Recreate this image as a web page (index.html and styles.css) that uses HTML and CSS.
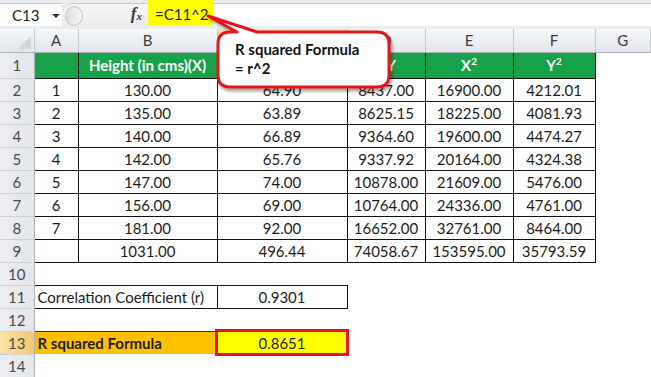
FILE: index.html
```html
<!DOCTYPE html>
<html lang="en">

<head>
    <meta charset="UTF-8">
    <meta name="viewport" content="width=device-width, initial-scale=1.0">
    <title>R Squared Formula</title>
    <link rel="stylesheet" href="styles.css">
</head>

<body>

    <div class="top">
        <div class="name-box">C13<span class="caret"></span></div>
        <div class="fx-area"><span class="knob"></span><span class="fx"><i>f</i><sub>x</sub></span></div>
        <div class="formula">=C11^2</div>
        <div class="formula-rest"></div>
    </div>

    <table class="grid">
        <colgroup>
            <col style="width:34px">
            <col style="width:44px">
            <col style="width:139px">
            <col style="width:130px">
            <col style="width:78px">
            <col style="width:88px">
            <col style="width:82px">
            <col>
        </colgroup>
        <tr class="col-heads">
            <th class="corner"><span class="corner-tri"></span></th>
            <th>A</th>
            <th>B</th>
            <th class="active">C</th>
            <th>D</th>
            <th>E</th>
            <th>F</th>
            <th>G</th>
        </tr>
        <tr class="r1">
            <td class="rh">1</td>
            <td class="b hd"></td>
            <td class="b hd">Height (in cms)(X)</td>
            <td class="b hd"></td>
            <td class="b hd">XY</td>
            <td class="b hd">X<sup>2</sup></td>
            <td class="b hd">Y<sup>2</sup></td>
            <td></td>
        </tr>
        <tr>
            <td class="rh">2</td>
            <td class="b">1</td><td class="b">130.00</td><td class="b">64.90</td>
            <td class="b">8437.00</td><td class="b">16900.00</td><td class="b">4212.01</td><td></td>
        </tr>
        <tr>
            <td class="rh">3</td>
            <td class="b">2</td><td class="b">135.00</td><td class="b">63.89</td>
            <td class="b">8625.15</td><td class="b">18225.00</td><td class="b">4081.93</td><td></td>
        </tr>
        <tr>
            <td class="rh">4</td>
            <td class="b">3</td><td class="b">140.00</td><td class="b">66.89</td>
            <td class="b">9364.60</td><td class="b">19600.00</td><td class="b">4474.27</td><td></td>
        </tr>
        <tr>
            <td class="rh">5</td>
            <td class="b">4</td><td class="b">142.00</td><td class="b">65.76</td>
            <td class="b">9337.92</td><td class="b">20164.00</td><td class="b">4324.38</td><td></td>
        </tr>
        <tr>
            <td class="rh">6</td>
            <td class="b">5</td><td class="b">147.00</td><td class="b">74.00</td>
            <td class="b">10878.00</td><td class="b">21609.00</td><td class="b">5476.00</td><td></td>
        </tr>
        <tr>
            <td class="rh">7</td>
            <td class="b">6</td><td class="b">156.00</td><td class="b">69.00</td>
            <td class="b">10764.00</td><td class="b">24336.00</td><td class="b">4761.00</td><td></td>
        </tr>
        <tr>
            <td class="rh">8</td>
            <td class="b">7</td><td class="b">181.00</td><td class="b">92.00</td>
            <td class="b">16652.00</td><td class="b">32761.00</td><td class="b">8464.00</td><td></td>
        </tr>
        <tr>
            <td class="rh">9</td>
            <td class="b"></td><td class="b">1031.00</td><td class="b">496.44</td>
            <td class="b">74058.67</td><td class="b">153595.00</td><td class="b">35793.59</td><td></td>
        </tr>
        <tr>
            <td class="rh">10</td>
            <td></td><td></td><td></td><td></td><td></td><td></td><td></td>
        </tr>
        <tr>
            <td class="rh">11</td>
            <td class="b left" colspan="2">Correlation Coefficient (r)</td>
            <td class="b">0.9301</td>
            <td></td><td></td><td></td><td></td>
        </tr>
        <tr>
            <td class="rh">12</td>
            <td></td><td></td><td></td><td></td><td></td><td></td><td></td>
        </tr>
        <tr>
            <td class="rh active">13</td>
            <td class="label-cell" colspan="2">R squared Formula</td>
            <td class="result">0.8651</td>
            <td></td><td></td><td></td><td></td>
        </tr>
        <tr>
            <td class="rh">14</td>
            <td></td><td></td><td></td><td></td><td></td><td></td><td></td>
        </tr>
    </table>

    <div class="callout">
        <svg class="callout-shape" width="200" height="90" viewBox="0 0 200 90">
            <defs>
                <filter id="shadow" x="-10%" y="-10%" width="130%" height="140%">
                    <feDropShadow dx="2" dy="3" stdDeviation="1.6" flood-color="#000" flood-opacity="0.35" />
                </filter>
            </defs>
            <path d="M 30,22 L 37,22 L 8,6 L 57,22 L 177,22 Q 189,22 189,34 L 189,65 Q 189,77 177,77 L 30,77 Q 18,77 18,65 L 18,34 Q 18,22 30,22 Z"
                fill="#fff" stroke="#e3141c" stroke-width="3" stroke-linejoin="round" filter="url(#shadow)" />
        </svg>
        <div class="callout-text">R squared Formula<br>= r^2</div>
    </div>

</body>

</html>
```

FILE: styles.css
```css
body {
    margin: 0;
    width: 651px;
    height: 377px;
    overflow: hidden;
    position: relative;
    background-color: #fff;
    font-family: Lato, "Open Sans", sans-serif;
    color: #1c1c1c;
}

/* formula bar */

.top {
    display: flex;
    height: 26px;
    background-color: #e9edf1;
    border-bottom: 3px solid #e9edf1;
}

.name-box {
    width: 50px;
    margin-top: 3px;
    padding-left: 12px;
    background-color: #fff;
    border-top: 1px solid #c3c8ce;
    font-size: 15px;
    line-height: 22px;
    position: relative;
}

.caret {
    position: absolute;
    left: 52px;
    top: 10px;
    border-left: 4px solid transparent;
    border-right: 4px solid transparent;
    border-top: 4px solid #333;
}

.fx-area {
    width: 86px;
    margin-top: 3px;
    background: linear-gradient(#f7f7f7, #ececec);
    border-top: 1px solid #c3c8ce;
    border-radius: 12px 0 0 12px;
    position: relative;
}

.knob {
    position: absolute;
    left: 3px;
    top: 2px;
    width: 16px;
    height: 18px;
    border-radius: 50%;
    border: 1px solid #c7c7c7;
    background: linear-gradient(90deg, #dcdcdc, #f8f8f8);
}

.fx {
    position: absolute;
    right: 6px;
    top: 0;
    font-family: "Liberation Serif", serif;
    font-size: 17px;
    font-weight: bold;
    color: #3a3a3a;
}

.fx sub {
    font-size: 11px;
    font-style: italic;
    vertical-align: -1px;
}

.formula {
    width: 58px;
    padding-left: 7px;
    background-color: #ffff00;
    font-size: 15px;
    line-height: 28px;
}

.formula-rest {
    flex: 1;
    margin-top: 3px;
    background-color: #fff;
    border-top: 1px solid #c3c8ce;
}

/* sheet grid */

.grid {
    border-collapse: collapse;
    table-layout: fixed;
    width: 651px;
}

.grid tr {
    height: 23px;
}

.grid tr.r1 {
    height: 26px;
}

.grid th {
    padding: 0;
    font-weight: normal;
    font-size: 15px;
    color: #3d3d3d;
    background: linear-gradient(#f5f7f9, #e2e6eb);
    border-right: 1px solid #c5cad0;
    border-bottom: 1px solid #aab1b9;
}

.grid th.active {
    background: linear-gradient(#fbe4ae, #f2c66e);
}

.grid th.corner {
    position: relative;
}

.corner-tri {
    position: absolute;
    right: 3px;
    bottom: 3px;
    border-left: 13px solid transparent;
    border-bottom: 13px solid #d3d7dc;
}

.grid td {
    padding: 0;
    font-size: 15px;
    text-align: center;
    white-space: nowrap;
    overflow: hidden;
}

.grid td.rh {
    color: #4a4a4a;
    background: linear-gradient(90deg, #eceef1, #e2e5e9);
    border-right: 1px solid #aab1b9;
    border-bottom: 1px solid #cdd1d6;
}

.grid td.rh.active {
    background: linear-gradient(90deg, #fbe1a6, #f5c86f);
}

.grid td.b {
    border: 1px solid #111;
}

.grid td.hd {
    background-color: #17a24a;
    color: #fff;
    font-weight: bold;
}

.grid td.hd sup {
    font-size: 10px;
    vertical-align: 6px;
    line-height: 0;
}

.grid td.left {
    text-align: left;
    padding-left: 3px;
}

.grid td.label-cell {
    text-align: left;
    padding-left: 3px;
    font-weight: bold;
    background-color: #ffc000;
    border-top: 1px solid #333;
}

.grid td.result {
    position: relative;
    background-color: #ffff00;
    outline: 3px solid #e8141c;
    outline-offset: -1px;
}

.grid td.result::after {
    content: "";
    position: absolute;
    right: -3px;
    bottom: -3px;
    width: 4px;
    height: 4px;
    background-color: #222;
}

/* callout */

.callout {
    position: absolute;
    left: 200px;
    top: 10px;
    width: 200px;
    height: 90px;
}

.callout-shape {
    display: block;
}

.callout-text {
    position: absolute;
    left: 35px;
    top: 30px;
    font-size: 15px;
    font-weight: bold;
    line-height: 19px;
    color: #111;
}
```
